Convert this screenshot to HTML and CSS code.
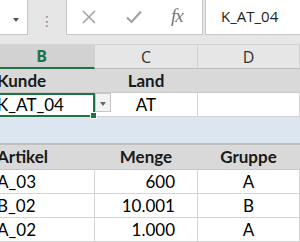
FILE: index.html
```html
<!DOCTYPE html>
<html>
<head>
<meta charset="utf-8">
<link rel="stylesheet" href="styles.css">
</head>
<body>
<div class="fbar">
  <div class="namebox"><span class="caret"></span></div>
  <div class="grip">⋮</div>
  <div class="fxbox">
    <svg class="ico" width="14" height="14" viewBox="0 0 14 14"><path d="M1 1 L13 13 M13 1 L1 13" stroke="#a3a3a3" stroke-width="1.6" fill="none"/></svg>
    <svg class="ico chk" width="16" height="14" viewBox="0 0 16 14"><path d="M1 7.5 L5.5 12 L15 1.5" stroke="#a3a3a3" stroke-width="2.2" fill="none"/></svg>
    <span class="fx">fx</span>
  </div>
  <div class="input">K_AT_04</div>
</div>
<div class="sheet">
  <div class="row colhdr">
    <div class="ch sel">B</div>
    <div class="ch">C</div>
    <div class="ch">D</div>
  </div>
  <div class="row hdr">
    <div class="c l">Kunde</div>
    <div class="c m">Land</div>
    <div class="c"></div>
  </div>
  <div class="row data">
    <div class="c l active">K_AT_04<span class="dd"></span><span class="handle"></span></div>
    <div class="c m">AT</div>
    <div class="c"></div>
  </div>
  <div class="row blue">
    <div class="c"></div><div class="c"></div><div class="c"></div>
  </div>
  <div class="row hdr hdr2">
    <div class="c l">Artikel</div>
    <div class="c m">Menge</div>
    <div class="c m">Gruppe</div>
  </div>
  <div class="row data">
    <div class="c l">A_03</div>
    <div class="c r">600</div>
    <div class="c m">A</div>
  </div>
  <div class="row data">
    <div class="c l">B_02</div>
    <div class="c r">10.001</div>
    <div class="c m">B</div>
  </div>
  <div class="row data">
    <div class="c l">A_02</div>
    <div class="c r">1.000</div>
    <div class="c m">A</div>
  </div>
</div>
</body>
</html>
```
FILE: styles.css
```css
html, body { margin: 0; padding: 0; }
body { width: 300px; height: 242px; overflow: hidden; background: #fff; font-family: Lato, "Open Sans", sans-serif; }

.fbar { height: 45px; background: #e6e6e6; display: flex; align-items: flex-start; box-sizing: border-box; border-bottom: 1px solid #d4d4d4; }
.namebox { width: 28px; height: 35px; background: #fff; border: 1px solid #c6c6c6; border-left: none; border-top: none; box-sizing: border-box; position: relative; }
.caret { position: absolute; left: 13px; top: 18px; width: 0; height: 0; border-left: 3.5px solid transparent; border-right: 3.5px solid transparent; border-top: 4px solid #555; }
.grip { width: 38px; text-align: center; color: #888; font-size: 14px; line-height: 14px; padding-top: 14px; font-family: "DejaVu Sans", sans-serif; }
.fxbox { width: 137px; height: 35px; background: #fff; border: 1px solid #c6c6c6; border-top: none; box-sizing: border-box; display: flex; align-items: center; padding-left: 15px; }
.ico { display: block; }
.chk { margin-left: 30px; }
.fx { margin-left: 29px; font-family: "Liberation Serif", "DejaVu Serif", serif; font-style: italic; font-size: 19px; color: #777; letter-spacing: -1px; margin-top: -2px; }
.input { flex: 1; margin-left: 2px; height: 35px; background: #fff; border: 1px solid #c6c6c6; border-top: none; border-right: none; box-sizing: border-box; font-family: "Open Sans", sans-serif; font-size: 15px; color: #222; padding-left: 15px; line-height: 33px; }

.sheet { margin-left: -11px; width: 311px; }
.row { display: grid; grid-template-columns: 106px 103px 102px; box-sizing: border-box; }
.colhdr { height: 24px; background: #e6e6e6; }
.ch { display: flex; justify-content: center; align-items: center; font-family: "Open Sans", sans-serif; font-size: 16px; color: #333; border-right: 1px solid #d0d0d0; border-bottom: 1px solid #bdbdbd; box-sizing: border-box; }
.ch.sel { background: #d2d2d2; color: #217346; font-weight: bold; border-bottom: 2px solid #217346; }

.c { box-sizing: border-box; border-right: 1px solid #d4d4d4; border-bottom: 1px solid #d4d4d4; font-size: 17px; color: #000; white-space: nowrap; position: relative; }
.l { padding-left: 8px; }
.r { text-align: right; padding-right: 22px; }
.m { text-align: center; }
.hdr { height: 24px; background: #d9d9d9; }
.hdr .c { font-weight: bold; color: #1a1a1a; line-height: 23px; border-right-color: #d9d9d9; border-bottom-color: #c8c8c8; }
.hdr2 { height: 25px; }
.data { height: 24px; }
.data .c { line-height: 23px; }
.blue { height: 28px; background: #dce6f1; border-bottom: 2px solid #bfbfbf; }
.blue .c { border: none; }

.active { outline: 2px solid #217346; outline-offset: -2px; z-index: 2; }
.dd { position: absolute; left: 106px; top: 0; width: 16px; height: 19px; background: #f2f2f2; border: 1px solid #c6c6c6; box-sizing: border-box; }
.dd::after { content: ""; position: absolute; left: 4px; top: 8px; border-left: 3.5px solid transparent; border-right: 3.5px solid transparent; border-top: 4px solid #666; }
.handle { position: absolute; right: -3px; bottom: -3px; width: 5px; height: 5px; background: #217346; border: 1px solid #fff; }
```
